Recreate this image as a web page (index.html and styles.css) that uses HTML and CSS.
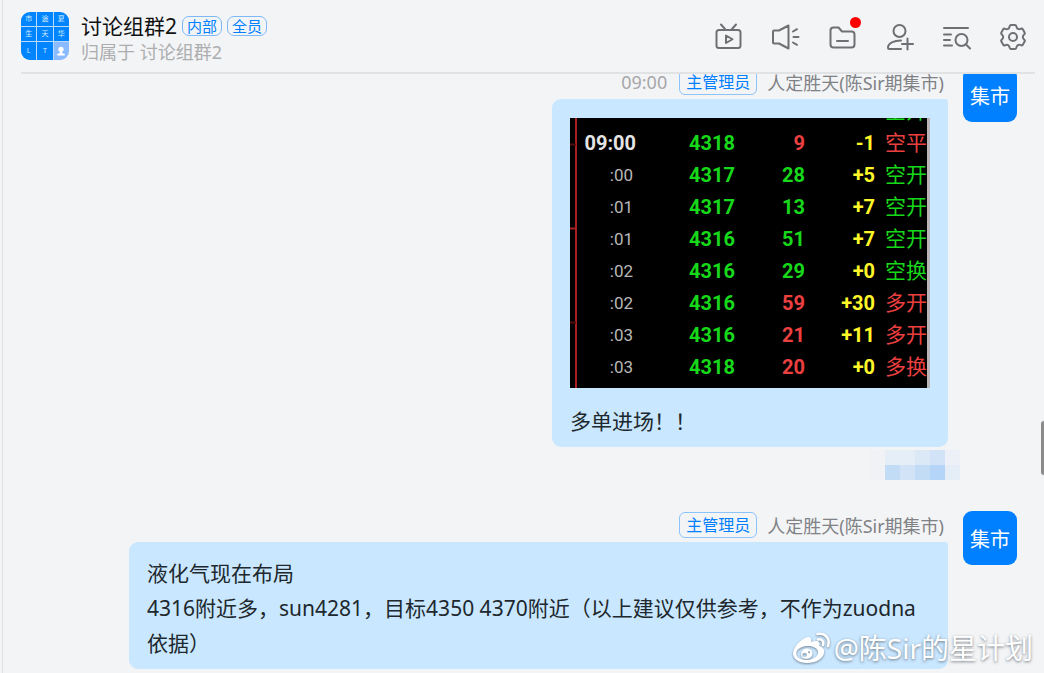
FILE: index.html
```html
<!DOCTYPE html>
<html lang="zh-CN">
<head>
<meta charset="utf-8">
<title>讨论组群2</title>
<link rel="stylesheet" href="styles.css">
</head>
<body>
<main class="chat">
  <header class="chat-header">
    <div class="group-avatar">
      <span>市</span><span>途</span><span>夏</span>
      <span>生</span><span>天</span><span>华</span>
      <span>L</span><span>T</span>
      <span class="person"><svg viewBox="0 0 16 16"><circle cx="8" cy="6" r="3"/><path d="M6.700 8h2.600v2.200l3 1.200v1.600H3.700v-1.600l3-1.200z"/></svg></span>
    </div>
    <div class="group-info">
      <div class="title-row">
        <h1 class="title">讨论组群2</h1>
        <span class="tag">内部</span>
        <span class="tag">全员</span>
      </div>
      <p class="subtitle">归属于 讨论组群2</p>
    </div>
    <nav class="tools">
      <button class="tool" type="button" aria-label="直播"><svg viewBox="0 0 30 30"><rect x="3.500" y="8" width="24" height="18" rx="2.500"/><path d="M8 2.500l4 4.500M23 2.500L19 7M13 13.500v7.500l6.500-3.750z"/></svg></button>
      <button class="tool" type="button" aria-label="公告"><svg viewBox="0 0 30 30"><path d="M4 8.500h5l9.500-5v23l-9.500-5H4a1 1 0 0 1-1-1v-11a1 1 0 0 1 1-1zM23 9.500l4-2.300M23.500 15h5M23 20.500l4 2.300"/></svg></button>
      <button class="tool" type="button" aria-label="文件"><svg viewBox="0 0 30 30"><path d="M3.500 8.500a3 3 0 0 1 3-3h5L15 9.500h9.500a3 3 0 0 1 3 3v10a3 3 0 0 1-3 3h-18a3 3 0 0 1-3-3zM10 19h11"/></svg><i class="dot"></i></button>
      <button class="tool" type="button" aria-label="添加成员"><svg viewBox="0 0 30 30"><circle cx="15.500" cy="9" r="6"/><path d="M17 18.500c-7 0-13 2.500-13 7 0 1 .5 1.500 1.500 1.500H17M23.500 16.500v11M18 22h11"/></svg></button>
      <button class="tool" type="button" aria-label="搜索记录"><svg viewBox="0 0 30 30"><path d="M3 6h24M3 12.500h7M3 18h6M3 23.500h8M25 22.500l4 4"/><circle cx="20.500" cy="18" r="6"/></svg></button>
      <button class="tool" type="button" aria-label="设置"><svg viewBox="0 0 30 30"><path d="M13 3h4q1 0 1.300 1.200Q19.200 8.300 23 6.800q1.200-.5 1.800.5l1.800 3.200q.6 1-.3 1.800-3 2.700 0 5.400.9.800.3 1.800l-1.800 3.200q-.6 1-1.800.5-3.800-1.500-4.700 2.600Q18 27 17 27h-4q-1 0-1.300-1.200-.9-4.100-4.700-2.600-1.200.5-1.800-.5l-1.800-3.200q-.6-1 .3-1.800 3-2.700 0-5.400-.9-.8-.3-1.800l1.800-3.200q.6-1 1.800-.5 3.800 1.500 4.700-2.600Q12 3 13 3z"/><circle cx="15" cy="15" r="4"/></svg></button>
    </nav>
  </header>

  <section class="messages">
    <article class="message">
      <div class="message-body">
        <div class="meta"><time class="time">09:00</time><span class="role">主管理员</span><span class="name">人定胜天(陈Sir期集市)</span></div>
        <div class="bubble">
          <div class="ticker">
            <svg class="axis" viewBox="0 0 8 270"><path d="M6 0v270M0 110.500h6"/><path class="faint" d="M0 26.500h6M0 204.500h6"/></svg>
            <table class="ticks">
              <tr><td></td><td></td><td></td><td></td><td>空开</td></tr>
              <tr><td class="full">09:00</td><td>4318</td><td class="down">9</td><td>-1</td><td class="down">空平</td></tr>
              <tr><td>:00</td><td>4317</td><td>28</td><td>+5</td><td>空开</td></tr>
              <tr><td>:01</td><td>4317</td><td>13</td><td>+7</td><td>空开</td></tr>
              <tr><td>:01</td><td>4316</td><td>51</td><td>+7</td><td>空开</td></tr>
              <tr><td>:02</td><td>4316</td><td>29</td><td>+0</td><td>空换</td></tr>
              <tr><td>:02</td><td>4316</td><td class="down">59</td><td>+30</td><td class="down">多开</td></tr>
              <tr><td>:03</td><td>4316</td><td class="down">21</td><td>+11</td><td class="down">多开</td></tr>
              <tr><td>:03</td><td>4318</td><td class="down">20</td><td>+0</td><td class="down">多换</td></tr>
            </table>
          </div>
          <p class="text">多单进场！！</p>
        </div>
        <div class="mosaic">
          <i></i><i class="m2"></i><i class="m2"></i><i class="m3"></i><i class="m4"></i><i class="m1"></i>
          <i></i><i class="m5"></i><i class="m4"></i><i class="m5"></i><i class="m6"></i><i class="m2"></i>
        </div>
      </div>
      <div class="avatar">集市</div>
    </article>

    <article class="message">
      <div class="message-body">
        <div class="meta"><span class="role">主管理员</span><span class="name">人定胜天(陈Sir期集市)</span></div>
        <div class="bubble">
          <p class="text">液化气现在布局<br>4316附近多，sun4281，目标4350 4370附近（以上建议仅供参考，不作为zuodna依据）</p>
        </div>
      </div>
      <div class="avatar">集市</div>
    </article>
  </section>

  <div class="scroll-thumb"></div>
  <div class="watermark">
    <svg viewBox="0 0 40 36"><path fill-rule="evenodd" d="M14 8c4-2 7-1 6 4 6-2 10-1 8 4 4 1 6 4 5 7-1 6-8 10-17 10C8 33 2 29 2 23.500 2 18 8 11 14 8zm2 8C9 16.500 5 20 5.300 24c.4 4 5.500 6.500 11.500 6s10.700-4 10.300-8c-.5-4-5.200-6.400-11.100-6zm-.5 2.500c4 0 6.500 2.300 6 5.500-.5 3-3.500 5-6.700 4.700-3.300-.3-5.300-2.700-4.700-5.500.5-2.700 2.900-4.700 5.400-4.700zM13.500 23a2.300 2 0 1 0 .1 4 2.300 2 0 0 0-.1-4zm4.500-1.700a1 1 0 1 0 .1 2 1 1 0 0 0-.1-2z"/><path class="wave" d="M27 9.500c3.500-.8 6.200 2 5 5.500M26.500 4c7.500-1.500 13 4.500 10.500 12"/></svg>
    <span>@陈Sir的星计划</span>
  </div>
</main>
</body>
</html>
```
FILE: styles.css
```css
* {
  box-sizing: border-box;
}

body {
  margin: 0;
  padding-left: 2px;
  background: #f3f4f6;
  color: #20272d;
  font-family: "Noto Sans", "Noto Sans CJK SC", sans-serif;
  font-weight: 400;
}

h1, p {
  margin: 0;
  font-weight: inherit;
}

.chat {
  position: relative;
  display: flex;
  flex-direction: column;
  height: 100vh;
  border-left: 1px solid #dfe0e2;
  overflow: hidden;
}

.chat-header {
  flex: none;
  display: flex;
  align-items: center;
  margin: 0 9px 0 18px;
  padding-right: 7px;
  height: 74px;
  border-bottom: 2px solid #e1e2e4;
}

.group-avatar {
  display: grid;
  grid-template-columns: repeat(3, 1fr);
  gap: 1px;
  width: 48px;
  height: 48px;
  border-radius: 9px;
  background: #b9dbfb;
  overflow: hidden;
}

.group-avatar span {
  display: flex;
  align-items: center;
  justify-content: center;
  background: #0085ff;
  color: #d9edff;
  font-size: 7px;
  line-height: 10px;
}

.group-avatar .person {
  background: #8abaff;
}

.person svg {
  width: 14px;
  height: 14px;
  fill: #fff;
}

.group-info {
  flex: 1;
  margin-left: 12px;
  padding-top: 6px;
}

.title-row {
  display: flex;
  align-items: center;
  gap: 5px;
}

.title {
  font-size: 21px;
  line-height: 26px;
  color: #111;
}

.tag {
  padding: 0 4px;
  border: 1px solid #7db9f8;
  border-radius: 7px;
  color: #0080ff;
  font-size: 15px;
  line-height: 18px;
}

.subtitle {
  color: #acadaf;
  font-size: 18px;
  line-height: 26px;
}

.tools {
  display: flex;
  gap: 27px;
  padding-top: 2px;
}

.tool {
  position: relative;
  width: 30px;
  height: 30px;
  padding: 0;
  border: 0;
  background: none;
}

.tool svg {
  display: block;
  width: 30px;
  height: 30px;
  fill: none;
  stroke: #6e7073;
  stroke-width: 2;
  stroke-linecap: round;
  stroke-linejoin: round;
}

.dot {
  position: absolute;
  top: -5px;
  right: -4px;
  width: 11px;
  height: 11px;
  border-radius: 50%;
  background: #f00;
}

.messages {
  flex: 1;
  min-height: 0;
  display: flex;
  flex-direction: column;
  justify-content: flex-end;
  gap: 31px;
  padding: 0 27px 4px 126px;
  overflow: hidden;
}

.message {
  flex: none;
  display: flex;
  gap: 15px;
}

.message-body {
  flex: 1;
  display: flex;
  flex-direction: column;
  align-items: flex-end;
}

.meta {
  display: flex;
  align-items: center;
  height: 31px;
  padding: 0 4px 4px 0;
  font-size: 18px;
}

.time {
  margin-right: 12px;
  color: #a6a7a9;
}

.role {
  margin-right: 10px;
  padding: 0 6px;
  border: 1px solid #8cc3fa;
  border-radius: 6px;
  color: #0080ff;
  font-size: 16px;
  line-height: 24px;
}

.name {
  color: #808285;
}

.bubble {
  padding: 14px 18px 8px;
  border-radius: 9px 3px 9px 9px;
  background: #c9e7ff;
}

.text {
  font-size: 21px;
  line-height: 35px;
}

.avatar {
  flex: none;
  display: flex;
  align-items: center;
  justify-content: center;
  width: 54px;
  height: 54px;
  border-radius: 9px;
  background: #0080ff;
  color: #fff;
  font-size: 20px;
}

.ticker {
  display: flex;
  align-items: flex-start;
  width: 360px;
  height: 270px;
  margin: 5px 0 16px;
  border-right: 3px solid #b9b4b6;
  background: #000;
  overflow: hidden;
}

.axis {
  flex: none;
  width: 8px;
  height: 270px;
  fill: none;
  stroke: #a82020;
  stroke-width: 2;
}

.axis .faint {
  stroke: #500c0c;
}

.ticks {
  flex: 1;
  margin-top: -23px;
  border-collapse: collapse;
  table-layout: fixed;
  color: #18d81c;
  font-family: Roboto, "Noto Sans CJK SC", sans-serif;
  font-size: 20px;
  font-weight: 700;
  line-height: 32px;
  text-align: right;
}

.ticks tr {
  height: 32px;
}

.ticks td {
  padding: 0;
  white-space: nowrap;
}

.ticks td:nth-child(1) {
  width: 59px;
  padding-right: 4px;
  color: #b8b8b8;
  font-size: 17px;
  font-weight: 400;
}

.ticks td:nth-child(1).full {
  padding-right: 1px;
  color: #e4e4e4;
  font-size: 20px;
  font-weight: 700;
}

.ticks td:nth-child(2) {
  width: 98px;
}

.ticks td:nth-child(3) {
  width: 70px;
}

.ticks td:nth-child(4) {
  width: 70px;
  color: #fff62a;
}

.ticks td:nth-child(5) {
  font-size: 21px;
  font-weight: 400;
}

.ticks td.down {
  color: #ec4040;
}

.mosaic {
  display: grid;
  grid-template-columns: repeat(6, 15px);
  grid-auto-rows: 15px;
  margin: 3px -12px 0 0;
}

.mosaic i {
  background: #f1f2f6;
}

.mosaic .m1 { background: #edf1f7; }
.mosaic .m2 { background: #e5edf6; }
.mosaic .m3 { background: #dbe8f5; }
.mosaic .m4 { background: #d2e3f7; }
.mosaic .m5 { background: #c2dcf6; }
.mosaic .m6 { background: #b4d5f8; }

.scroll-thumb {
  position: absolute;
  top: 421px;
  right: 0;
  width: 3px;
  height: 54px;
  border-radius: 3px 0 0 3px;
  background: #8b8b8b;
}

.watermark {
  position: absolute;
  right: 11px;
  bottom: 6px;
  display: flex;
  align-items: center;
  gap: 3px;
  color: #fff;
  font-size: 28px;
  font-weight: 400;
  line-height: 38px;
  text-shadow: 0 1px 3px rgba(60, 70, 80, 0.7);
}

.watermark svg {
  width: 40px;
  height: 36px;
  fill: #fff;
  filter: drop-shadow(0 1px 1px rgba(60, 70, 80, 0.6));
}

.watermark .wave {
  fill: none;
  stroke: #fff;
  stroke-width: 2.5;
  stroke-linecap: round;
}
```
